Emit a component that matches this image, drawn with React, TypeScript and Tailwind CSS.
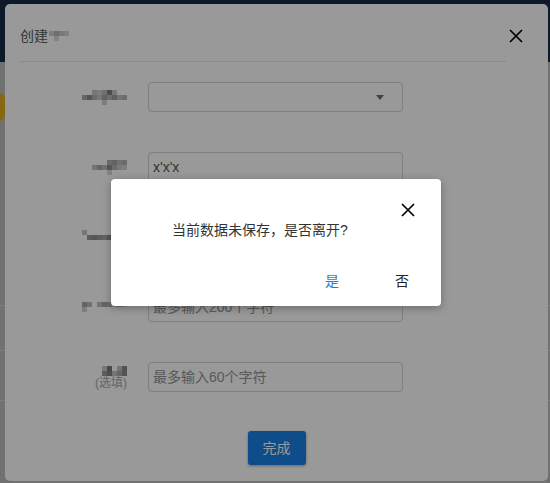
import React from 'react'

// pixelated (censored) label, drawn as a strip of grey cells
function Mosaic({ cells, className = '' }: { cells: string[][]; className?: string }) {
  return (
    <div className={`flex flex-col ${className}`}>
      {cells.map((row, i) => (
        <div key={i} className="flex">
          {row.map((c, j) => (
            <span key={j} className="block w-[5px] h-[5px]" style={{ background: c }} />
          ))}
        </div>
      ))}
    </div>
  )
}

const CloseIcon = ({ className = '' }: { className?: string }) => (
  <svg viewBox="0 0 14 14" className={className} fill="none">
    <path d="M1 1L13 13M13 1L1 13" stroke="currentColor" strokeWidth="1.7" />
  </svg>
)

const T = 'transparent'

const rows = [
  {
    cells: [
      [T, T, '#c6c6c6', '#d2d2d2', '#bdbdbd', '#7f7f7f', '#c8c8c8', T, T],
      ['#aaaaaa', '#8c8c8c', '#b3b3b3', '#c6c6c6', '#a5a5a5', '#b8b8b8', '#9f9f9f', '#c2c2c2', '#b6b6b6'],
      [T, T, T, T, '#d0d0d0', T, T, T, T],
    ],
    value: '',
    select: true,
  },
  {
    cells: [
      [T, T, T, T, '#b0b0b0', '#a3a3a3', '#bcbcbc', '#b2b2b2'],
      [T, '#c2c2c2', '#a8a8a8', '#bdbdbd', '#8e8e8e', '#b4b4b4', '#cbcbcb', '#d4d4d4'],
      [T, T, T, T, '#d8d8d8', T, T, T],
    ],
    value: "x'x'x",
  },
  {
    cells: [
      ['#c6c6c6', T, T, T, T, T, T, T, T],
      [T, '#9a9a9a', '#8f8f8f', '#9c9c9c', '#a6a6a6', '#8e8e8e', '#9b9b9b', '#a3a3a3', '#bebebe'],
      [T, T, T, T, T, T, '#d4d4d4', T, T],
    ],
    value: '',
  },
  {
    cells: [
      [T, '#a7a7a7', '#bcbcbc', T, '#c2c2c2', '#a9a9a9', '#b7b7b7', '#cccccc', '#b2b2b2', '#d1d1d1'],
      [T, '#d3d3d3', T, T, T, T, T, T, T, T],
    ],
    placeholder: '最多输入200个字符',
  },
  {
    cells: [
      [T, '#c8c8c8', '#7a7a7a', T, '#c4c4c4', '#8a8a8a'],
      [T, '#9a9a9a', '#808080', '#c0c0c0', '#a8a8a8', '#8c8c8c'],
    ],
    placeholder: '最多输入60个字符',
    optional: true,
  },
]

export default function App() {
  return (
    <div className="relative w-[550px] h-[483px] overflow-hidden bg-[#bcbcbc] font-['Liberation_Sans','Noto_Sans_CJK_SC',sans-serif]">
      {/* page behind */}
      <div className="h-[62px] bg-[#172a45]" />
      <div className="absolute left-[-14px] top-[92px] w-[20px] h-[30px] rounded-full bg-[#e2ac1c]" />
      <div className="absolute left-0 right-0 top-[305px] h-px bg-[#d0d0d0]" />
      <div className="absolute left-0 right-0 top-[350px] h-px bg-[#d0d0d0]" />
      <div className="absolute left-0 right-0 top-[400px] h-px bg-[#d0d0d0]" />

      {/* create modal */}
      <div className="absolute left-[5px] top-[4px] w-[543px] h-[477px] rounded-[5px] bg-white">
        <div className="flex h-[57px] items-center justify-between pt-[7px] pl-[15px] pr-[25px]">
          <div className="flex items-center text-[14px] text-[#5a5a5a]">
            创建
            <Mosaic
              className="ml-[1px]"
              cells={[
                ['#d0d0d0', '#b8b8b8', '#c8c8c8', '#d6d6d6'],
                [T, '#dadada', T, T],
              ]}
            />
          </div>
          <CloseIcon className="w-[14px] h-[14px] text-black" />
        </div>
        <div className="ml-[15px] mr-[42px] h-px bg-[#e6e6e6]" />

        <div className="mt-[20px] flex flex-col gap-[40px]">
          {rows.map((r, i) => (
            <div key={i} className="flex items-center">
              <div className="w-[122px] flex flex-col items-end">
                <Mosaic cells={r.cells} />
                {r.optional && <span className="mt-[1px] text-[12px] leading-none text-[#a8a8a8]">(选填)</span>}
              </div>
              <div className="ml-[21px] flex h-[30px] w-[255px] items-center justify-between rounded-[4px] border border-[#d4d4d4] px-[4px] text-[14px]">
                {r.value ? (
                  <span className="text-[#555]">{r.value}</span>
                ) : r.placeholder ? (
                  <span className="text-[#939393]">{r.placeholder}</span>
                ) : (
                  <span />
                )}
                {r.select && (
                  <svg viewBox="0 0 8 5" className="mr-[14px] w-[8px] h-[5px]">
                    <path d="M0 0H8L4 5Z" fill="#6e6e6e" />
                  </svg>
                )}
              </div>
            </div>
          ))}
        </div>

        <div className="mt-[39px] flex justify-center">
          <button className="h-[34px] w-[58px] rounded-[3px] bg-[#1880e6] text-[14px] text-white shadow-[0_1px_3px_rgba(0,0,0,0.35)]">
            完成
          </button>
        </div>
      </div>

      {/* dim overlay */}
      <div className="absolute inset-0 bg-black/40" />

      {/* confirm dialog */}
      <div className="absolute left-[111px] top-[179px] w-[330px] h-[127px] rounded-[4px] bg-white shadow-[0_2px_8px_rgba(0,0,0,0.3)] text-[14px]">
        <div className="flex justify-end pt-[24px] pr-[26px]">
          <CloseIcon className="w-[14px] h-[14px] text-black" />
        </div>
        <p className="pl-[61px] mt-[3px] text-[#333]">当前数据未保存，是否离开?</p>
        <div className="mt-[30px] flex justify-end gap-[56px] pr-[32px]">
          <span className="text-[#2f7cd6]">是</span>
          <span className="text-[#222]">否</span>
        </div>
      </div>
    </div>
  )
}
